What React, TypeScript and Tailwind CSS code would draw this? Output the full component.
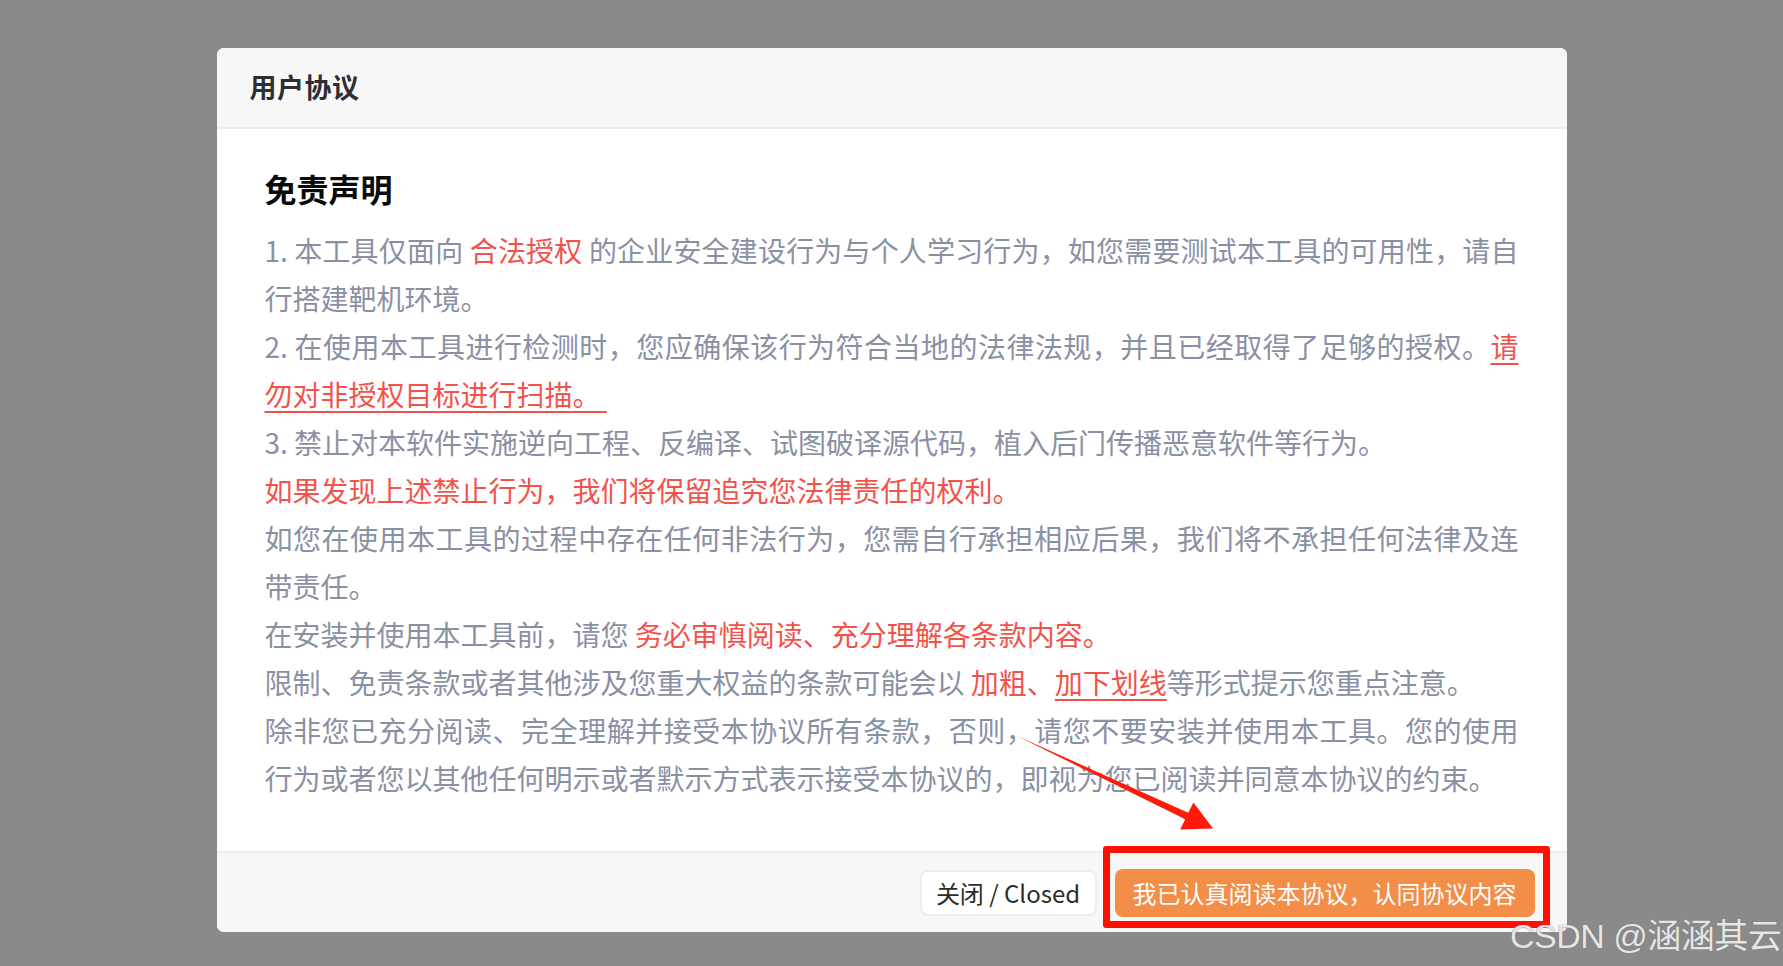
import React from 'react';

const font = { fontFamily: '"Noto Sans CJK SC", "Noto Sans", sans-serif' };

const Red = ({ children, underline }: { children: React.ReactNode; underline?: boolean }) => (
  <span className={underline ? 'text-[#f3524a] underline underline-offset-[5px] decoration-[2px]' : 'text-[#f3524a]'}>{children}</span>
);

const App = () => {
  return (
    <div
      className="relative w-full h-[966px] overflow-hidden bg-[#8a8a8a] pt-[48px]"
      style={font}
    >
      <div className="mx-auto w-[1350px] rounded-[7px] bg-white overflow-hidden">
        {/* header */}
        <div className="h-[81px] bg-[#f7f7f8] border-b-2 border-[#e9ecf1] flex items-center pl-[33px]">
          <span className="text-[27px] font-bold text-[#2c2e33] tracking-[0.5px]">用户协议</span>
        </div>

        {/* body */}
        <div className="px-[48px] pt-[35px] pb-[49px]">
          <h2 className="text-[32px] leading-[48px] h-[48px] font-bold text-[#0a0a0a] mb-[14px]">免责声明</h2>
          <div className="text-[28px] leading-[48px] text-[#8a90a3]">
            <p className="text-justify">
              1. 本工具仅面向 <Red>合法授权</Red> 的企业安全建设行为与个人学习行为，如您需要测试本工具的可用性，请自行搭建靶机环境。
            </p>
            <p className="text-justify">
              2. 在使用本工具进行检测时，您应确保该行为符合当地的法律法规，并且已经取得了足够的授权。<Red underline>请勿对非授权目标进行扫描。&nbsp;</Red>
            </p>
            <p className="text-justify">3. 禁止对本软件实施逆向工程、反编译、试图破译源代码，植入后门传播恶意软件等行为。</p>
            <p className="text-justify">
              <Red>如果发现上述禁止行为，我们将保留追究您法律责任的权利。</Red>
            </p>
            <p className="text-justify">如您在使用本工具的过程中存在任何非法行为，您需自行承担相应后果，我们将不承担任何法律及连带责任。</p>
            <p className="text-justify">
              在安装并使用本工具前，请您 <Red>务必审慎阅读、充分理解各条款内容。</Red>
            </p>
            <p className="text-justify">
              限制、免责条款或者其他涉及您重大权益的条款可能会以 <Red>加粗、</Red>
              <Red underline>加下划线</Red>等形式提示您重点注意。
            </p>
            <p className="text-justify">
              除非您已充分阅读、完全理解并接受本协议所有条款，否则，请您不要安装并使用本工具。您的使用行为或者您以其他任何明示或者默示方式表示接受本协议的，即视为您已阅读并同意本协议的约束。
            </p>
          </div>
        </div>

        {/* footer */}
        <div className="h-[81px] bg-[#f7f7f8] border-t-2 border-[#eceef2] flex items-center justify-end gap-[18px] pr-[32px]">
          <button className="h-[46px] w-[177px] rounded-[8px] bg-white border-2 border-[#eaedf2] text-[24px] text-[#2b2b2b] flex items-center justify-center">
            关闭 / Closed
          </button>
          <button className="h-[48px] w-[420px] rounded-[8px] bg-[#f28e47] text-[24px] text-white flex items-center justify-center">
            我已认真阅读本协议，认同协议内容
          </button>
        </div>
      </div>

      {/* red annotation box */}
      <div className="absolute left-[1103px] top-[846px] w-[447px] h-[82px] border-[7px] border-[#ff1000] rounded-[3px]" />

      {/* red annotation arrow */}
      <svg className="absolute left-0 top-0 pointer-events-none" width="1783" height="966" viewBox="0 0 1783 966">
        <polygon
          points="1015,735 1188.2,812.8 1193.5,802.5 1213,828.5 1180.2,829.5 1185.2,819.2"
          fill="#ff1a0a"
        />
      </svg>

      {/* watermark */}
      <div
        className="absolute left-[1510px] top-[916px] text-[34px] leading-[40px] text-[#e6e6e6] tracking-[-0.5px]"
        style={{ fontFamily: '"Liberation Sans", "Noto Sans CJK SC", sans-serif', textShadow: '0 0 1px #666' }}
      >
        CSDN @涵涵其云
      </div>
    </div>
  );
};

export default App;
